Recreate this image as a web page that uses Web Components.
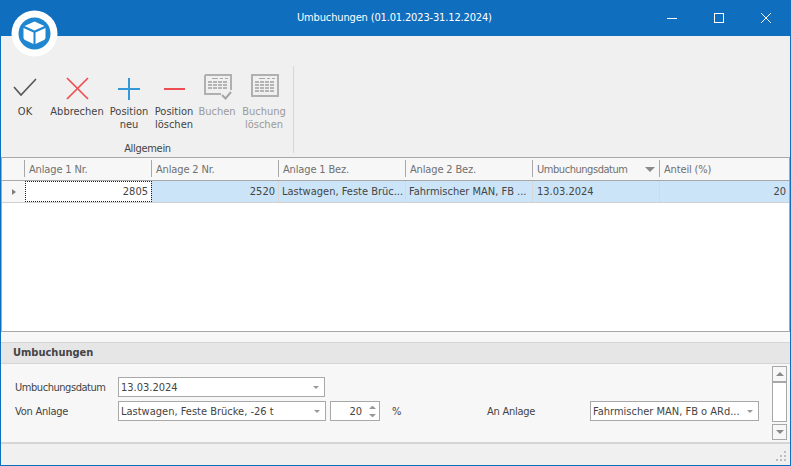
<!DOCTYPE html>
<html lang="de">
<head>
<meta charset="utf-8">
<title>Umbuchungen</title>
<style>
html, body { margin: 0; padding: 0; overflow: hidden; }
body { font: 11px "DejaVu Sans Condensed", "DejaVu Sans", sans-serif; font-stretch: condensed; color: #444; }
</style>
</head>
<body>
<app-window>
  <title-bar slot="title">Umbuchungen (01.01.2023-31.12.2024)</title-bar>
  <ribbon-bar slot="ribbon">
    <ribbon-button width="42" icon="check">OK</ribbon-button>
    <ribbon-button width="62" icon="cross">Abbrechen</ribbon-button>
    <ribbon-button width="42" icon="plus">Position<br>neu</ribbon-button>
    <ribbon-button width="48" icon="minus">Position<br>löschen</ribbon-button>
    <ribbon-button width="38" icon="sheet-check" disabled>Buchen</ribbon-button>
    <ribbon-button width="56" icon="sheet" disabled>Buchung<br>löschen</ribbon-button>
  </ribbon-bar>
  <data-grid slot="grid"></data-grid>
  <form-panel slot="form" heading="Umbuchungen">
    <div-row>
      <field-label tight>Umbuchungsdatum</field-label>
      <combo-edit width="207" pad="2">13.03.2024</combo-edit>
    </div-row>
    <div-row>
      <field-label>Von Anlage</field-label>
      <combo-edit width="208" pad="2">Lastwagen, Feste Brücke, -26 t</combo-edit>
      <spin-edit>20</spin-edit>
      <field-label width="107" inset="12">%</field-label>
      <field-label width="103">An Anlage</field-label>
      <combo-edit width="169" pad="2">Fahrmischer MAN, FB o ARd...</combo-edit>
    </div-row>
  </form-panel>
  <status-bar slot="status"></status-bar>
</app-window>

<script>
const ICONS = {
  check: '<path d="M5 13 L12 21 L27 5" fill="none" stroke="#555" stroke-width="1.6"/>',
  cross: '<path d="M6 4 L27 25 M27 4 L6 25" fill="none" stroke="#ee4e52" stroke-width="1.7"/>',
  plus: '<path d="M5 15 H27 M16 4 V26" fill="none" stroke="#3397d8" stroke-width="2"/>',
  minus: '<path d="M6 15 H27" fill="none" stroke="#ee4e52" stroke-width="2"/>'
};

function sheetIcon(withCheck) {
  let cells = '<path d="M11 4.500 h6 M19 4.500 h3 M24 4.500 h3" stroke="#a8a8a8"/>';
  const rows = withCheck ? [7, 10, 13] : [7, 10, 13, 16];
  for (const y of rows) {
    for (let x = 7; x <= 22; x += 5) {
      cells += `<rect x="${x}" y="${y}" width="4" height="2" fill="#b4b4b4"/>`;
    }
  }
  const frame = withCheck
    ? '<path d="M4 1 H30 V16 M4 1 V20 H20" fill="none" stroke="#b0b0b0" stroke-width="2"/><path d="M21 21 L24.500 24.500 L30 18" fill="none" stroke="#a5a5a5" stroke-width="2"/>'
    : '<path d="M4 1 H30 V22 H4 Z" fill="none" stroke="#b0b0b0" stroke-width="2"/>';
  return frame + cells;
}
ICONS['sheet-check'] = sheetIcon(true);
ICONS.sheet = sheetIcon(false);

class AppWindow extends HTMLElement {
  constructor() {
    super();
    this.attachShadow({ mode: 'open' });
    this.shadowRoot.innerHTML = `
      <style>
        :host {
          display: flex;
          flex-direction: column;
          box-sizing: border-box;
          width: 791px;
          height: 466px;
          background: #f0f0f0;
          border: solid #106ebe;
          border-width: 0 1px 1px 1px;
          position: relative;
        }
        .gap { height: 10px; background: #f7f7f7; flex: none; }
        .logo { position: absolute; left: 10px; top: 10px; width: 47px; height: 47px; }
      </style>
      <slot name="title"></slot>
      <slot name="ribbon"></slot>
      <slot name="grid"></slot>
      <div class="gap"></div>
      <slot name="form"></slot>
      <slot name="status"></slot>
      <svg class="logo" viewBox="0 0 47 47">
        <circle cx="23.5" cy="23.5" r="23" fill="#fff"/>
        <circle cx="23.5" cy="23.5" r="16" fill="#1f86d0"/>
        <path d="M23.5 11.5 L33.5 16 L23.5 20.5 L13.5 16 Z" fill="#fff"/>
        <path d="M12.5 18 L22.5 22.5 V34 L14 30 Q12.5 29.300 12.500 27.500 Z" fill="#fff"/>
        <path d="M34.500 18 L24.500 22.500 V34 L33 30 Q34.500 29.300 34.500 27.500 Z" fill="#fff"/>
      </svg>`;
  }
}

class TitleBar extends HTMLElement {
  constructor() {
    super();
    this.attachShadow({ mode: 'open' });
    this.shadowRoot.innerHTML = `
      <style>
        :host {
          display: flex;
          align-items: center;
          flex: none;
          height: 36px;
          background: #106ebe;
          color: #fff;
          font-size: 11px;
          padding-left: 296px;
          padding-right: 1px;
        }
        .text { flex: 1; margin-top: -1px; letter-spacing: -0.15px; }
        .btn { width: 47px; height: 36px; display: flex; align-items: center; justify-content: center; }
        svg { width: 12px; height: 12px; }
      </style>
      <div class="text"><slot></slot></div>
      <div class="btn"><svg viewBox="0 0 12 12"><path d="M1 6.500 H11" stroke="#fff"/></svg></div>
      <div class="btn"><svg viewBox="0 0 12 12"><rect x="1.500" y="1.500" width="9" height="9" fill="none" stroke="#fff"/></svg></div>
      <div class="btn"><svg viewBox="0 0 12 12"><path d="M1 1 L11 11 M11 1 L1 11" stroke="#fff"/></svg></div>`;
  }
}

class RibbonBar extends HTMLElement {
  constructor() {
    super();
    this.attachShadow({ mode: 'open' });
    this.shadowRoot.innerHTML = `
      <style>
        :host {
          display: block;
          flex: none;
          box-sizing: border-box;
          height: 122px;
          padding: 30px 0 0 3px;
          border-bottom: 1px solid #a8a8a8;
        }
        .group {
          display: inline-flex;
          flex-direction: column;
          height: 87px;
          border-right: 1px solid #d8d8d8;
          width: 289px;
        }
        .buttons { display: flex; flex: none; height: 73px; }
        .label { flex: none; text-align: center; line-height: 14px; margin: 3px 0 -3px; padding-right: 2px; letter-spacing: -0.3px; }
      </style>
      <div class="group">
        <div class="buttons"><slot></slot></div>
        <div class="label">Allgemein</div>
      </div>`;
  }
}

class RibbonButton extends HTMLElement {
  constructor() {
    super();
    this.attachShadow({ mode: 'open' });
    this.shadowRoot.innerHTML = `
      <style>
        :host {
          display: flex;
          flex-direction: column;
          align-items: center;
          flex: none;
          line-height: 13px;
          text-align: center;
          white-space: nowrap;
        }
        :host([disabled]) { color: #9a9a9a; }
        svg { width: 32px; height: 30px; margin: 8px 0 1px; display: block; }
      </style>
      <svg viewBox="0 0 32 30"></svg>
      <div><slot></slot></div>`;
  }
  connectedCallback() {
    this.style.width = this.getAttribute('width') + 'px';
    this.shadowRoot.querySelector('svg').innerHTML = ICONS[this.getAttribute('icon')] || '';
  }
}

class DataGrid extends HTMLElement {
  constructor() {
    super();
    this.attachShadow({ mode: 'open' });
    const heads = ['Anlage 1 Nr.', 'Anlage 2 Nr.', 'Anlage 1 Bez.', 'Anlage 2 Bez.', 'Umbuchungsdatum', 'Anteil (%)'];
    const cells = [
      ['2805', 'focus num'], ['2520', 'num'], ['Lastwagen, Feste Brüc...', ''],
      ['Fahrmischer MAN, FB ...', ''], ['13.03.2024', 'date'], ['20', 'num']
    ];
    this.shadowRoot.innerHTML = `
      <style>
        :host {
          display: block;
          flex: none;
          box-sizing: border-box;
          height: 174px;
          background: #fff;
          border: 1px solid #a8a8a8;
          border-top: 0;
        }
        .row {
          display: grid;
          grid-template-columns: 23px repeat(5, 127px) 1fr;
        }
        .head { height: 23px; background: #f7f7f7; border-bottom: 1px solid #a8a8a8; box-sizing: border-box; color: #707070; letter-spacing: -0.15px; }
        .head div { display: flex; align-items: center; justify-content: space-between; padding: 0 5px 0 4px; position: relative; }
        .head div::before { content: ""; position: absolute; left: -1px; top: 2px; bottom: 3px; border-left: 1px solid #a8a8a8; }
        .head div:first-child::before { display: none; }
        .head .tight { letter-spacing: -0.45px; }
        .head i { border: solid transparent; border-width: 5px 5px 0; border-top-color: #8a8a8a; }
        .data { height: 22px; background: #cce4f7; color: #444; box-sizing: border-box; border-bottom: 1px solid #d0d0d0; }
        .data div { display: flex; align-items: center; box-sizing: border-box; padding: 0 3px; border-right: 1px solid #d8d8d8; white-space: nowrap; overflow: hidden; }
        .data .ind { background: #f7f7f7; border-right: 0; padding: 0 0 0 10px; }
        .data .ind::before { content: ""; border: solid transparent; border-width: 3.500px 0 3.500px 4px; border-left-color: #808080; }
        .data .num { justify-content: flex-end; }
        .data .date { padding-left: 4px; }
        .data .focus { background: #fff; outline: 1px dotted #222; outline-offset: -1px; }
        .data div:last-child { border-right: 0; }
      </style>
      <div class="row head">
        <div></div>
        ${heads.map((h, i) => `<div><span class="${i === 4 ? 'tight' : ''}">${h}</span>${i === 4 ? '<i></i>' : ''}</div>`).join('')}
      </div>
      <div class="row data">
        <div class="ind"></div>
        ${cells.map(c => `<div class="${c[1]}">${c[0]}</div>`).join('')}
      </div>`;
  }
}

class FormPanel extends HTMLElement {
  constructor() {
    super();
    this.attachShadow({ mode: 'open' });
    this.shadowRoot.innerHTML = `
      <style>
        :host { display: block; flex: none; background: #f7f7f7; }
        h2 {
          margin: 0;
          box-sizing: border-box;
          height: 22px;
          padding: 2px 0 0 12px;
          font-size: 11px;
          line-height: 16px;
          font-weight: 700;
          color: #444;
          background: #e6e6e6;
          border: solid #d5d5d5;
          border-width: 1px 0;
        }
        .body {
          display: flex;
          box-sizing: border-box;
          height: 80px;
          border-bottom: 2px solid #d5d5d5;
        }
        .rows { flex: 1; display: flex; flex-direction: column; gap: 4px; padding: 13px 0 0 14px; }
        v-scroll { margin: 2px 3px 0 0; }
      </style>
      <h2></h2>
      <div class="body">
        <div class="rows"><slot></slot></div>
        <v-scroll></v-scroll>
      </div>`;
  }
  connectedCallback() {
    this.shadowRoot.querySelector('h2').textContent = this.getAttribute('heading');
  }
}

class DivRow extends HTMLElement {
  constructor() {
    super();
    this.attachShadow({ mode: 'open' });
    this.shadowRoot.innerHTML = `
      <style>:host { display: flex; align-items: center; height: 20px; }</style>
      <slot></slot>`;
  }
}

class FieldLabel extends HTMLElement {
  constructor() {
    super();
    this.attachShadow({ mode: 'open' });
    this.shadowRoot.innerHTML = `
      <style>
        :host { display: block; flex: none; width: 103px; box-sizing: border-box; letter-spacing: -0.25px; }
        :host([tight]) { letter-spacing: -0.45px; }
      </style>
      <slot></slot>`;
  }
  connectedCallback() {
    if (this.hasAttribute('width')) this.style.width = this.getAttribute('width') + 'px';
    if (this.hasAttribute('inset')) this.style.paddingLeft = this.getAttribute('inset') + 'px';
  }
}

class ComboEdit extends HTMLElement {
  constructor() {
    super();
    this.attachShadow({ mode: 'open' });
    this.shadowRoot.innerHTML = `
      <style>
        :host {
          display: flex;
          align-items: center;
          flex: none;
          box-sizing: border-box;
          height: 20px;
          background: #fff;
          border: 1px solid #a8a8a8;
          white-space: nowrap;
        }
        .text { flex: 1; overflow: hidden; }
        i { flex: none; margin-right: 5px; border: solid transparent; border-width: 3px 3px 0; border-top-color: #999; margin-left: 3px; }
      </style>
      <div class="text"><slot></slot></div>
      <i></i>`;
  }
  connectedCallback() {
    this.style.width = this.getAttribute('width') + 'px';
    this.style.paddingLeft = this.getAttribute('pad') + 'px';
  }
}

class SpinEdit extends HTMLElement {
  constructor() {
    super();
    this.attachShadow({ mode: 'open' });
    this.shadowRoot.innerHTML = `
      <style>
        :host {
          display: flex;
          align-items: center;
          flex: none;
          box-sizing: border-box;
          width: 50px;
          height: 20px;
          margin-left: 4px;
          background: #fff;
          border: 1px solid #a8a8a8;
        }
        .text { flex: 1; text-align: right; }
        .arrows { display: flex; flex-direction: column; gap: 5px; width: 7px; margin: 0 3px 0 7px; }
        .up { border: solid transparent; border-width: 0 3.500px 3px; border-bottom-color: #999; }
        .down { border: solid transparent; border-width: 3px 3.500px 0; border-top-color: #999; }
      </style>
      <div class="text"><slot></slot></div>
      <div class="arrows"><div class="up"></div><div class="down"></div></div>`;
  }
}

class VScroll extends HTMLElement {
  constructor() {
    super();
    this.attachShadow({ mode: 'open' });
    this.shadowRoot.innerHTML = `
      <style>
        :host { display: flex; flex-direction: column; flex: none; width: 15px; gap: 2px; height: 74px; }
        div { box-sizing: border-box; border: 1px solid #a8a8a8; background: #fff; display: flex; align-items: center; justify-content: center; }
        .btn { height: 16px; flex: none; background: #f7f7f7; }
        .thumb { flex: 1; margin-top: -2px; }
        i { border: solid transparent; }
        .up i { border-width: 0 4px 4px; border-bottom-color: #8a8a8a; }
        .down i { border-width: 4px 4px 0; border-top-color: #8a8a8a; }
      </style>
      <div class="btn up"><i></i></div>
      <div class="thumb"></div>
      <div class="btn down"><i></i></div>`;
  }
}

class StatusBar extends HTMLElement {
  constructor() {
    super();
    this.attachShadow({ mode: 'open' });
    this.shadowRoot.innerHTML = `
      <style>
        :host { display: flex; flex: 1; justify-content: flex-end; align-items: flex-end; padding: 0 3px 3px 0; background: #f0f0f0; }
        svg { width: 11px; height: 11px; }
      </style>
      <svg viewBox="0 0 11 11" fill="#bdbdbd">
        <rect x="8" y="0" width="2" height="2"/>
        <rect x="4" y="4" width="2" height="2"/><rect x="8" y="4" width="2" height="2"/>
        <rect x="0" y="8" width="2" height="2"/><rect x="4" y="8" width="2" height="2"/><rect x="8" y="8" width="2" height="2"/>
      </svg>`;
  }
}

customElements.define('app-window', AppWindow);
customElements.define('title-bar', TitleBar);
customElements.define('ribbon-bar', RibbonBar);
customElements.define('ribbon-button', RibbonButton);
customElements.define('data-grid', DataGrid);
customElements.define('form-panel', FormPanel);
customElements.define('div-row', DivRow);
customElements.define('field-label', FieldLabel);
customElements.define('combo-edit', ComboEdit);
customElements.define('spin-edit', SpinEdit);
customElements.define('v-scroll', VScroll);
customElements.define('status-bar', StatusBar);
</script>
</body>
</html>
